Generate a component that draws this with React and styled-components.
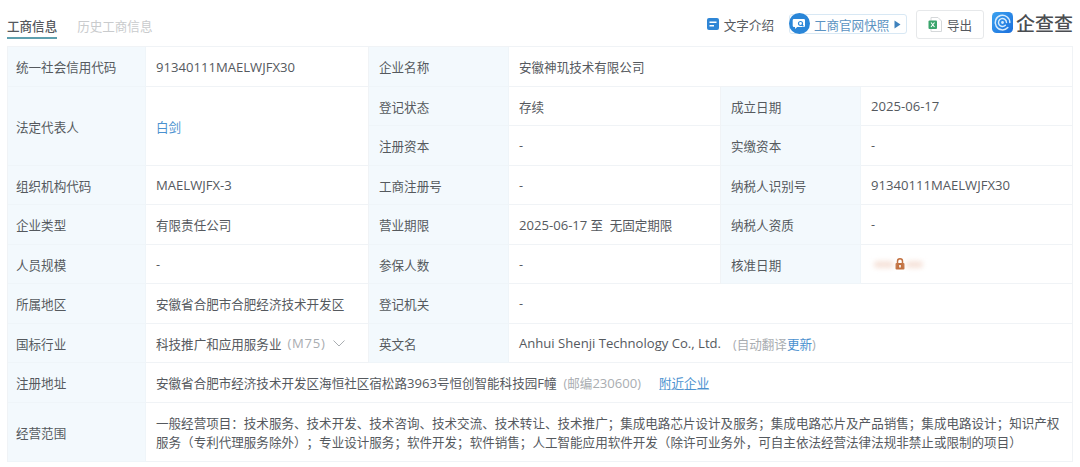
import React from "react";
import styled, { createGlobalStyle } from "styled-components";

const Global = createGlobalStyle`
  html, body { margin: 0; padding: 0; background: #fff; }
  body {
    width: 1080px; height: 467px; overflow: hidden;
    font-family: "Open Sans", "Noto Sans CJK SC", sans-serif;
    font-size: 12.55px; color: #55595e;
    text-spacing-trim: space-all;
  }
`;

const Page = styled.div`
  padding: 0 7px;
  display: flex;
  flex-direction: column;
`;

const Header = styled.header`
  height: 46px;
  display: flex;
  justify-content: space-between;
  align-items: flex-start;
`;

const Tabs = styled.nav`
  display: flex;
  gap: 20px;
  padding-top: 17px;
`;

const Tab = styled.span`
  height: 20px;
  line-height: 19px;
  color: ${(p) => (p.$active ? "#55595e" : "#c9cbcd")};
  font-weight: ${(p) => (p.$active ? 500 : 400)};
  border-bottom: ${(p) => (p.$active ? "2px solid #5d9fae" : "2px solid transparent")};
`;

const Tools = styled.div`
  display: flex;
  align-items: center;
  height: 48px;
`;

const TextTool = styled.span`
  display: flex;
  align-items: center;
  gap: 5px;
  margin-right: 15px;
`;

const Snapshot = styled.span`
  display: flex;
  align-items: center;
  height: 20px;
  width: 118px;
  margin-right: 9px;
  position: relative;
  box-sizing: border-box;
  padding-left: 24px;
  border: 1px solid #d8e8f4;
  border-radius: 3px;
  color: #5c93c2;
  gap: 5px;
`;

const SnapshotBadge = styled.span`
  position: absolute;
  left: -1px;
  top: -2px;
  width: 21px;
  height: 21px;
  border-radius: 50%;
  background: #2a86d8;
  display: flex;
  align-items: center;
  justify-content: center;
`;

const ExportButton = styled.span`
  width: 68px;
  height: 29px;
  box-sizing: border-box;
  border: 1px solid #e6e8ea;
  border-radius: 3px;
  display: flex;
  align-items: center;
  justify-content: center;
  gap: 5px;
  margin-right: 8px;
`;

const Logo = styled.span`
  display: flex;
  align-items: center;
  gap: 3px;
  font-size: 19px;
  font-weight: 500;
  color: #4a4d51;
  margin-top: -3px;
`;

const Table = styled.section`
  display: grid;
  grid-template-columns: 138px 223px 140px 212px 140px 212px;
  grid-template-rows: 40px 39px 40px 39px 40px 39px 40px 39px 40px 59px;
  border-top: 1px solid #f0f3f6;
  border-left: 1px solid #f0f3f6;
  width: 1066px;
  box-sizing: border-box;
`;

const Cell = styled.div`
  grid-column: span ${(p) => p.$cols || 1};
  grid-row: span ${(p) => p.$rows || 1};
  display: flex;
  align-items: center;
  box-sizing: border-box;
  padding: 0 10px;
  border-right: 1px solid #f0f3f6;
  border-bottom: 1px solid #f0f3f6;
  white-space: pre;
`;

const Label = styled(Cell)`
  background: #f3f9fd;
  border-color: #eff5f9;
`;

const LeadLabel = styled(Label)`
  padding-left: 8px;
`;

const Latin = styled.span`
  font-size: 13.1px;
`;

const Muted = styled.span`
  color: #a9adb1;
`;

const IndustryCode = styled(Muted)`
  font-size: 13.1px;
  letter-spacing: 0.7px;
  margin-left: 6px;
`;

const TranslateNote = styled(Muted)`
  margin-left: 12px;
`;

const ZipNote = styled(Muted)`
  margin-left: 7px;
`;

const Link = styled.a`
  color: #4b91cf;
  text-decoration: ${(p) => (p.$underline ? "underline" : "none")};
  text-decoration-color: #a9cbe6;
  margin-left: ${(p) => p.$gap || 0}px;
`;

const Chevron = styled.svg`
  margin-left: 8px;
`;

const Scope = styled(Cell)`
  line-height: 19.5px;
  padding-top: 2px;
`;

const Blurred = styled.span`
  display: flex;
  align-items: center;
  gap: 1px;
  margin-left: 3px;
`;

const Smudge = styled.span`
  width: ${(p) => p.$w}px;
  height: 7px;
  border-radius: 4px;
  background: #f6e3da;
  filter: blur(2.5px);
`;

function DocIcon() {
  return (
    <svg width="12" height="12" viewBox="0 0 12 12">
      <rect width="12" height="12" rx="2" fill="#2f86d6" />
      <rect x="2.5" y="3.5" width="7" height="1.5" fill="#fff" />
      <rect x="2.5" y="7" width="4.5" height="1.5" fill="#fff" />
    </svg>
  );
}

function SnapshotIcon() {
  return (
    <svg width="14" height="12" viewBox="0 0 14 12">
      <path d="M2 1h9.500A1.300 1.300 0 0 1 13 2.300v5.400A1.300 1.300 0 0 1 11.500 9H5.200L3 11V9H2A1.300 1.300 0 0 1 .700 7.700V2.300A1.300 1.300 0 0 1 2 1z" fill="#fff" />
      <circle cx="8.500" cy="5.500" r="2" fill="none" stroke="#2a86d8" strokeWidth="1.200" />
      <path d="M10 7l1.400 1.300" stroke="#2a86d8" strokeWidth="1.200" />
    </svg>
  );
}

function ExcelIcon() {
  return (
    <svg width="14" height="15" viewBox="0 0 14 15">
      <path d="M3 .5h7l3.500 3.500v10.500H3z" fill="#fff" stroke="#d5d8da" />
      <rect x="0.500" y="3.500" width="8.500" height="8.500" rx="1" fill="#3aa56c" />
      <path d="M3 5.500l3.500 4.500M6.500 5.500L3 10" stroke="#fff" strokeWidth="1.100" />
    </svg>
  );
}

function LogoMark() {
  return (
    <svg width="21" height="21" viewBox="0 0 21 21">
      <defs>
        <linearGradient id="logoFill" x1="0" y1="0" x2="1" y2="1">
          <stop offset="0" stopColor="#3aa2f0" />
          <stop offset="1" stopColor="#1c6fdc" />
        </linearGradient>
      </defs>
      <rect width="21" height="21" rx="4.500" fill="url(#logoFill)" />
      <path d="M15.800 15.600A7.300 7.300 0 1 1 17.800 10.500" fill="none" stroke="#d6ebfc" strokeWidth="1.500" strokeLinecap="round" />
      <path d="M13.400 13.300A4 4 0 1 1 14.500 10.500" fill="none" stroke="#d6ebfc" strokeWidth="1.400" strokeLinecap="round" />
      <circle cx="10.500" cy="10.500" r="1.400" fill="#d6ebfc" />
    </svg>
  );
}

function LockIcon() {
  return (
    <svg width="10" height="12" viewBox="0 0 10 12">
      <path d="M2.500 5V3.300a2.500 2.500 0 0 1 5 0V5" fill="none" stroke="#c2703f" strokeWidth="1.500" />
      <rect x="0.500" y="5" width="9" height="6.500" rx="1" fill="#c2703f" />
      <rect x="4.200" y="7" width="1.600" height="2.500" fill="#fff" />
    </svg>
  );
}

export default function App() {
  return (
    <Page>
      <Global />
      <Header>
        <Tabs>
          <Tab $active>工商信息</Tab>
          <Tab>历史工商信息</Tab>
        </Tabs>
        <Tools>
          <TextTool>
            <DocIcon />
            文字介绍
          </TextTool>
          <Snapshot>
            <SnapshotBadge>
              <SnapshotIcon />
            </SnapshotBadge>
            工商官网快照
            <svg width="7" height="9" viewBox="0 0 7 9">
              <path d="M0.500 0.500L6.500 4.500L0.500 8.500z" fill="#3f82bd" />
            </svg>
          </Snapshot>
          <ExportButton>
            <ExcelIcon />
            导出
          </ExportButton>
          <Logo>
            <LogoMark />
            企查查
          </Logo>
        </Tools>
      </Header>
      <Table>
        <LeadLabel>统一社会信用代码</LeadLabel>
        <Cell><Latin>91340111MAELWJFX30</Latin></Cell>
        <Label>企业名称</Label>
        <Cell $cols={3}>安徽神玑技术有限公司</Cell>
        <LeadLabel $rows={2}>法定代表人</LeadLabel>
        <Cell $rows={2}>
          <Link>白剑</Link>
        </Cell>
        <Label>登记状态</Label>
        <Cell>存续</Cell>
        <Label>成立日期</Label>
        <Cell><Latin>2025-06-17</Latin></Cell>
        <Label>注册资本</Label>
        <Cell>-</Cell>
        <Label>实缴资本</Label>
        <Cell>-</Cell>
        <LeadLabel>组织机构代码</LeadLabel>
        <Cell><Latin>MAELWJFX-3</Latin></Cell>
        <Label>工商注册号</Label>
        <Cell>-</Cell>
        <Label>纳税人识别号</Label>
        <Cell><Latin>91340111MAELWJFX30</Latin></Cell>
        <LeadLabel>企业类型</LeadLabel>
        <Cell>有限责任公司</Cell>
        <Label>营业期限</Label>
        <Cell><Latin>2025-06-17</Latin> 至  无固定期限</Cell>
        <Label>纳税人资质</Label>
        <Cell>-</Cell>
        <LeadLabel>人员规模</LeadLabel>
        <Cell>-</Cell>
        <Label>参保人数</Label>
        <Cell>-</Cell>
        <Label>核准日期</Label>
        <Cell>
          <Blurred>
            <Smudge $w={20} />
            <LockIcon />
            <Smudge $w={17} />
          </Blurred>
        </Cell>
        <LeadLabel>所属地区</LeadLabel>
        <Cell>安徽省合肥市合肥经济技术开发区</Cell>
        <Label>登记机关</Label>
        <Cell $cols={3}>-</Cell>
        <LeadLabel>国标行业</LeadLabel>
        <Cell>
          科技推广和应用服务业
          <IndustryCode>(M75)</IndustryCode>
          <Chevron width="12" height="7" viewBox="0 0 12 7">
            <path d="M0.500 0.500L6 6L11.500 0.500" fill="none" stroke="#a9adb1" />
          </Chevron>
        </Cell>
        <Label>英文名</Label>
        <Cell $cols={3}>
          <Latin>Anhui Shenji Technology Co., Ltd.</Latin>
          <TranslateNote>
            (自动翻译<Link>更新</Link>)
          </TranslateNote>
        </Cell>
        <LeadLabel>注册地址</LeadLabel>
        <Cell $cols={5}>
          安徽省合肥市经济技术开发区海恒社区宿松路<Latin>3963</Latin>号恒创智能科技园<Latin>F</Latin>幢
          <ZipNote>(邮编<Latin>230600</Latin>)</ZipNote>
          <Link $underline $gap={18}>附近企业</Link>
        </Cell>
        <LeadLabel>经营范围</LeadLabel>
        <Scope $cols={5}>
          <span>
            一般经营项目：技术服务、技术开发、技术咨询、技术交流、技术转让、技术推广；集成电路芯片设计及服务；集成电路芯片及产品销售；集成电路设计；知识产权
            <br />
            服务（专利代理服务除外）；专业设计服务；软件开发；软件销售；人工智能应用软件开发（除许可业务外，可自主依法经营法律法规非禁止或限制的项目）
          </span>
        </Scope>
      </Table>
    </Page>
  );
}
